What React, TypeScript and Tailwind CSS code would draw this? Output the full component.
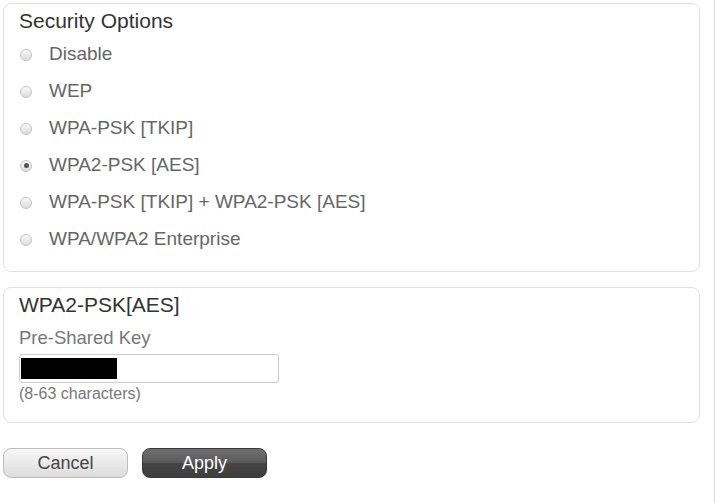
import { useState } from "react";

const options = [
  "Disable",
  "WEP",
  "WPA-PSK [TKIP]",
  "WPA2-PSK [AES]",
  "WPA-PSK [TKIP] + WPA2-PSK [AES]",
  "WPA/WPA2 Enterprise",
];

const Radio = ({ checked }: { checked: boolean }) => (
  <span className="flex h-[12px] w-[12px] items-center justify-center rounded-full border border-[#c4c4c4] bg-gradient-to-b from-[#fafafa] to-[#dcdcdc]">
    {checked && <span className="h-[5px] w-[5px] rounded-full bg-[#555]" />}
  </span>
);

const App = () => {
  const [selected, setSelected] = useState(3);

  return (
    <div className="flex h-[503px] w-[715px] bg-white font-['Liberation_Sans',Arial,sans-serif]">
      <div className="flex w-[714px] flex-col pl-[3px] pr-[14px] pt-[3px]">
        <div className="h-[269px] rounded-[8px] border border-[#e2e2e2] px-[15px] pt-[4px]">
          <h2 className="text-[21px] leading-[26px] text-[#333]">Security Options</h2>
          <div className="mt-[2px] flex flex-col">
            {options.map((opt, i) => (
              <label
                key={opt}
                className="flex h-[37px] cursor-pointer items-center"
                onClick={() => setSelected(i)}
              >
                <span className="flex w-[30px] pl-[1px]">
                  <Radio checked={selected === i} />
                </span>
                <span className="text-[19px] text-[#666]">{opt}</span>
              </label>
            ))}
          </div>
        </div>

        <div className="mt-[15px] h-[136px] rounded-[8px] border border-[#e2e2e2] px-[15px] pt-[4px]">
          <h2 className="text-[21px] leading-[26px] text-[#333]">WPA2-PSK[AES]</h2>
          <div className="mt-[9px] text-[18.5px] leading-[22px] text-[#777]">Pre-Shared Key</div>
          <div className="mt-[5px] flex h-[29px] w-[260px] items-center rounded-[3px] border border-[#ccc] px-[1px]">
            <span className="h-[21px] w-[96px] bg-black" />
          </div>
          <div className="mt-[1px] text-[16px] leading-[20px] text-[#777]">(8-63 characters)</div>
        </div>

        <div className="mt-[25px] flex gap-[14px]">
          <button className="h-[30px] w-[125px] rounded-[8px] border border-[#bdbdbd] bg-gradient-to-b from-[#f7f7f7] to-[#dcdcdc] text-[18px] text-[#444]">
            Cancel
          </button>
          <button className="h-[30px] w-[125px] rounded-[8px] border border-[#3a3a3a] bg-[linear-gradient(#6e6e6e_0%,#5a5a5a_50%,#454545_51%,#3e3e3e_100%)] text-[18px] text-white">
            Apply
          </button>
        </div>
      </div>
      <div className="h-full w-px bg-[#dcdcdc]" />
    </div>
  );
};

export default App;
